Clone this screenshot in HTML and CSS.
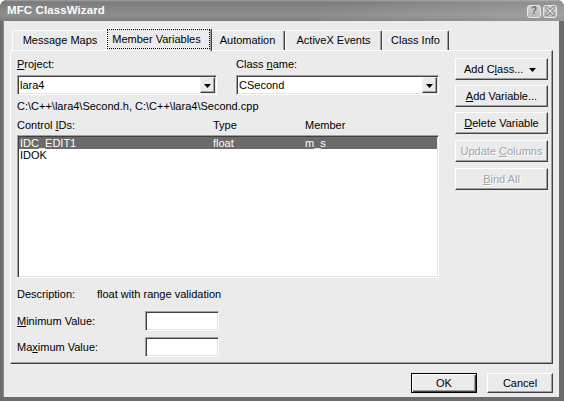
FILE: index.html
```html
<!DOCTYPE html>
<html>
<head>
<meta charset="utf-8">
<title>MFC ClassWizard</title>
<link rel="stylesheet" href="styles.css">
</head>
<body>
<div class="window">
  <div class="titlebar">
    <span class="title">MFC ClassWizard</span>
    <div class="caption-btns">
      <span class="cap-btn help">?</span>
      <span class="cap-btn close">
        <svg width="10" height="10" viewBox="0 0 10 10">
          <path d="M1.5 1.5 L8.5 8.5 M8.5 1.5 L1.5 8.5" stroke="#7a7a7a" stroke-width="3" stroke-linecap="square"/>
          <path d="M1.5 1.5 L8.5 8.5 M8.5 1.5 L1.5 8.5" stroke="#e6e6e6" stroke-width="1.2" stroke-linecap="square"/>
        </svg>
      </span>
    </div>
  </div>
  <div class="client">
    <div class="tabs">
      <div class="tab t-mm">Message Maps</div>
      <div class="tab sel t-mv"><span class="focus">Member Variables</span></div>
      <div class="tab t-au">Automation</div>
      <div class="tab t-ax">ActiveX Events</div>
      <div class="tab t-ci">Class Info</div>
    </div>
    <div class="panel">
      <div class="left">
        <div class="fields">
          <div class="field f-project">
            <div class="lbl"><u>P</u>roject:</div>
            <div class="combo">
              <span class="val">lara4</span>
              <span class="drop"><svg width="7" height="4" viewBox="0 0 7 4"><polygon points="0,0 7,0 3.5,4" fill="#000"/></svg></span>
            </div>
          </div>
          <div class="field f-class">
            <div class="lbl">Class <u>n</u>ame:</div>
            <div class="combo">
              <span class="val">CSecond</span>
              <span class="drop"><svg width="7" height="4" viewBox="0 0 7 4"><polygon points="0,0 7,0 3.5,4" fill="#000"/></svg></span>
            </div>
          </div>
        </div>
        <div class="path">C:\C++\lara4\Second.h, C:\C++\lara4\Second.cpp</div>
        <div class="list-head">
          <span class="c1">Control <u>I</u>Ds:</span>
          <span class="c2">Type</span>
          <span class="c3">Member</span>
        </div>
        <div class="list">
          <div class="row sel"><span class="c1">IDC_EDIT1</span><span class="c2">float</span><span class="c3">m_s</span></div>
          <div class="row"><span class="c1">IDOK</span><span class="c2"></span><span class="c3"></span></div>
        </div>
        <div class="desc">
          <span class="desc-label">Description:</span>
          <span class="desc-val">float with range validation</span>
        </div>
        <div class="range r-min">
          <span class="range-label"><u>M</u>inimum Value:</span>
          <span class="edit"></span>
        </div>
        <div class="range r-max">
          <span class="range-label">Ma<u>x</u>imum Value:</span>
          <span class="edit"></span>
        </div>
      </div>
      <div class="buttons">
        <div class="btn b-addclass"><span class="btn-text">Add C<u>l</u>ass...</span><svg class="arrow" width="7" height="4" viewBox="0 0 7 4"><polygon points="0,0 7,0 3.5,4" fill="#000"/></svg></div>
        <div class="btn b-addvar"><span><u>A</u>dd Variable...</span></div>
        <div class="btn b-del"><span><u>D</u>elete Variable</span></div>
        <div class="btn disabled b-upd"><span>Update <u>C</u>olumns</span></div>
        <div class="btn disabled b-bind"><span><u>B</u>ind All</span></div>
      </div>
    </div>
    <div class="footer">
      <div class="btn default b-ok"><span>OK</span></div>
      <div class="btn b-cancel"><span>Cancel</span></div>
    </div>
  </div>
</div>
</body>
</html>
```
FILE: styles.css
```css
* { box-sizing: border-box; }
html, body { margin: 0; padding: 0; }
body {
  width: 564px;
  height: 401px;
  overflow: hidden;
  background: #ffffff;
  font-family: "Liberation Sans", Arial, sans-serif;
  font-size: 11px;
  color: #000;
}
u { text-decoration: underline; text-underline-offset: 1px; }

.window {
  width: 564px;
  height: 401px;
  background: #6c6c6c;
  border-radius: 7px 7px 0 0;
  display: flex;
  flex-direction: column;
  overflow: hidden;
}

.titlebar {
  height: 21px;
  flex: none;
  display: flex;
  align-items: center;
  padding: 0 7px 0 7px;
  background:
    linear-gradient(to right, rgba(255,255,255,0) 55%, rgba(255,255,255,0.18) 100%),
    linear-gradient(to bottom, #a2a2a2 0, #7a7a7a 2px, #838383 7px, #8e8e8e 15px, #7f7f7f 21px);
}
.title {
  flex: 1;
  font-weight: bold;
  font-size: 11.5px;
  color: #fcfcfc;
  letter-spacing: 0.1px;
  line-height: 13px;
  margin-top: -1px;
}
.caption-btns { display: flex; gap: 2px; margin-top: 1px; }
.cap-btn {
  width: 14px;
  height: 13px;
  border: 1px solid #e8e8e8;
  border-radius: 3px;
  background: linear-gradient(#d0d0d0, #b8b8b8);
  display: flex;
  align-items: center;
  justify-content: center;
}
.cap-btn.help {
  font-weight: bold;
  font-size: 10px;
  color: #666;
  line-height: 10px;
}

.client {
  margin: 0 5px 4px 4px;
  height: 376px;
  background: #ebebeb;
  display: flex;
  flex-direction: column;
  padding: 7px 6px 0 6px;
  box-shadow: -1px 0 0 #8c8c8c;
}

/* Tabs */
.tabs {
  height: 22px;
  flex: none;
  display: flex;
  align-items: flex-end;
  padding-left: 2px;
  position: relative;
  z-index: 2;
}
.tab {
  height: 20px;
  border-top: 1px solid #fff;
  border-left: 1px solid #fff;
  border-right: 1px solid #404040;
  box-shadow: inset -1px 0 0 #a0a0a0;
  border-radius: 2px 2px 0 0;
  text-align: center;
  line-height: 13px;
  padding-top: 3px;
  background: #ebebeb;
}
.t-mm { width: 96px; }
.t-au { width: 75px; }
.t-ax { width: 97px; }
.t-ci { width: 67px; }
.tab.sel {
  width: 106px;
  height: 23px;
  margin: 0 -2px -1px -2px;
  padding-top: 0;
  position: relative;
  z-index: 3;
}
.tab.sel .focus {
  display: block;
  height: 20px;
  margin-right: 1px;
  border: 1px dotted #000;
  padding: 3px 4px 0 0;
  line-height: 13px;
}

/* Panel */
.panel {
  height: 314px;
  flex: none;
  border: 1px solid;
  border-color: #fff #404040 #404040 #fff;
  box-shadow: inset -1px -1px 0 #a0a0a0;
  display: flex;
  gap: 16px;
  padding: 7px 4px 0 6px;
  position: relative;
  z-index: 1;
}
.left {
  width: 422px;
  display: flex;
  flex-direction: column;
}
.fields { display: flex; gap: 19px; }
.f-project { width: 200px; }
.f-class { width: 203px; }
.lbl { line-height: 13px; height: 13px; }

.combo, .list, .edit {
  background: #fff;
  border: 1px solid;
  border-color: #a0a0a0 #fff #fff #a0a0a0;
  box-shadow: inset 1px 1px 0 #404040, inset -1px -1px 0 #e3e3e3;
}
.combo {
  margin-top: 4px;
  height: 20px;
  display: flex;
  align-items: center;
  padding: 0 1px 0 2px;
}
.combo .val { flex: 1; line-height: 13px; }
.drop {
  width: 15px;
  height: 16px;
  background: #ebebeb;
  border: 1px solid;
  border-color: #f4f4f4 #404040 #404040 #f4f4f4;
  box-shadow: inset -1px -1px 0 #a0a0a0;
  display: flex;
  align-items: center;
  justify-content: center;
  padding-top: 1px;
}

.path { margin-top: 5px; line-height: 13px; }

.list-head { margin-top: 6px; display: flex; line-height: 13px; }
.list-head .c1 { width: 196px; }
.list-head .c2 { width: 92px; }

.list {
  margin-top: 3px;
  height: 143px;
  padding: 1px;
}
.row {
  display: flex;
  height: 12px;
  line-height: 12px;
  padding-left: 1px;
}
.row .c1 { width: 193px; }
.row .c2 { width: 92px; }
.row.sel { background: #6b6b6b; color: #fff; }

.desc { margin-top: 10px; display: flex; line-height: 13px; }
.desc-label { width: 80px; }

.range { display: flex; align-items: center; height: 20px; }
.r-min { margin-top: 10px; }
.r-max { margin-top: 6px; }
.range-label { width: 128px; line-height: 13px; }
.edit { display: block; width: 74px; height: 20px; }

/* Buttons */
.buttons {
  width: 93px;
  display: flex;
  flex-direction: column;
}
.btn {
  height: 22px;
  border: 1px solid;
  border-color: #fff #404040 #404040 #fff;
  box-shadow: inset -1px -1px 0 #a0a0a0;
  background: #ebebeb;
  display: flex;
  align-items: center;
  justify-content: center;
  line-height: 13px;
  white-space: nowrap;
}
.b-addclass { justify-content: flex-start; padding-left: 8px; }
.b-addclass .btn-text { flex: 1; }
.b-addclass .arrow { margin-right: 11px; margin-top: 1px; }
.b-addvar { margin-top: 5px; }
.b-del { margin-top: 5px; }
.b-upd { margin-top: 6px; }
.b-bind { margin-top: 6px; }
.btn.disabled { color: #a3a3a3; text-shadow: 1px 1px 0 #fff; }

/* Footer */
.footer {
  margin-top: 9px;
  display: flex;
  justify-content: flex-end;
  gap: 10px;
}
.footer .btn { width: 66px; height: 20px; }
.btn.default {
  border: 1px solid #000;
  box-shadow: inset 1px 1px 0 #fff, inset -1px -1px 0 #404040, inset -2px -2px 0 #a0a0a0;
}
```
